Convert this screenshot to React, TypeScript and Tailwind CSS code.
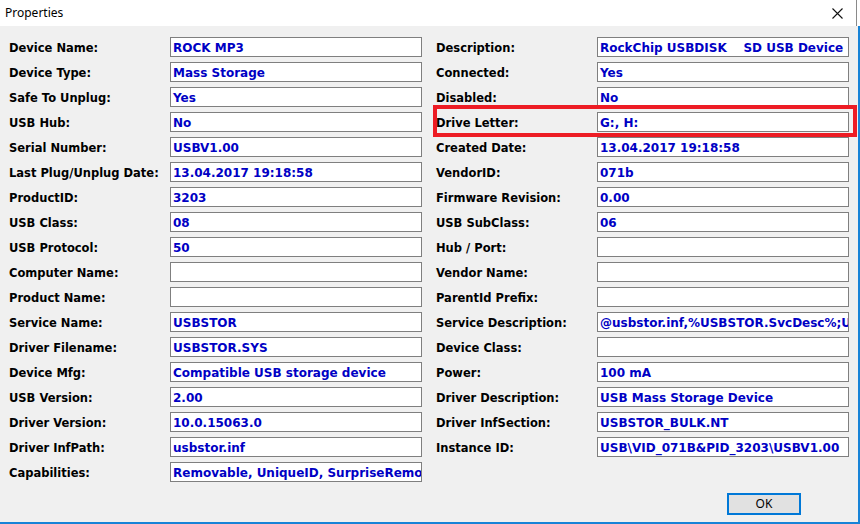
import React from "react";

const left: [string, string][] = [
  ["Device Name:", "ROCK MP3"],
  ["Device Type:", "Mass Storage"],
  ["Safe To Unplug:", "Yes"],
  ["USB Hub:", "No"],
  ["Serial Number:", "USBV1.00"],
  ["Last Plug/Unplug Date:", "13.04.2017 19:18:58"],
  ["ProductID:", "3203"],
  ["USB Class:", "08"],
  ["USB Protocol:", "50"],
  ["Computer Name:", ""],
  ["Product Name:", ""],
  ["Service Name:", "USBSTOR"],
  ["Driver Filename:", "USBSTOR.SYS"],
  ["Device Mfg:", "Compatible USB storage device"],
  ["USB Version:", "2.00"],
  ["Driver Version:", "10.0.15063.0"],
  ["Driver InfPath:", "usbstor.inf"],
  ["Capabilities:", "Removable, UniqueID, SurpriseRemovalOK"],
];

const right: [string, string][] = [
  ["Description:", "RockChip USBDISK    SD USB Device"],
  ["Connected:", "Yes"],
  ["Disabled:", "No"],
  ["Drive Letter:", "G:, H:"],
  ["Created Date:", "13.04.2017 19:18:58"],
  ["VendorID:", "071b"],
  ["Firmware Revision:", "0.00"],
  ["USB SubClass:", "06"],
  ["Hub / Port:", ""],
  ["Vendor Name:", ""],
  ["ParentId Prefix:", ""],
  ["Service Description:", "@usbstor.inf,%USBSTOR.SvcDesc%;USB Mass Storage"],
  ["Device Class:", ""],
  ["Power:", "100 mA"],
  ["Driver Description:", "USB Mass Storage Device"],
  ["Driver InfSection:", "USBSTOR_BULK.NT"],
  ["Instance ID:", "USB\\VID_071B&PID_3203\\USBV1.00"],
];

function Field({ label, value }: { label: string; value: string }) {
  return (
    <div className="flex h-[20px] items-center">
      <div className="w-[161px] shrink-0 pt-[4px] text-[11.5px] text-black">{label}</div>
      <div className="flex h-[20px] w-[252px] items-center overflow-hidden whitespace-pre border border-[#7f7f7f] bg-white pl-[2px] pt-[1px] text-[12px] text-[#0000c4]">
        {value}
      </div>
    </div>
  );
}

export default function App() {
  return (
    <div className="relative h-[524px] w-[860px] overflow-hidden bg-white" style={{ fontFamily: "'DejaVu Sans', sans-serif" }}>
      <div className="flex h-[26px] w-[857px] items-center justify-between border-r border-[#8a8a8a] bg-white pl-[5px] pr-[14px]">
        <span className="text-[12px] text-black" style={{ fontFamily: "'Noto Sans', sans-serif" }}>Properties</span>
        <svg width="11" height="11" viewBox="0 0 11 11" className="mr-[-1px]">
          <path d="M0.5 0.5 L10.5 10.5 M10.5 0.5 L0.5 10.5" stroke="#111" strokeWidth="1.1" fill="none" />
        </svg>
      </div>
      <div className="h-[498px] w-[860px] border-b-2 border-r-2 border-[#1883d7] bg-[#f0f0f0] pt-[11px]">
        <div className="flex gap-[14px] pl-[9px] font-bold leading-none">
          <div className="flex flex-col gap-[5px]">
            {left.map(([l, v]) => (
              <Field key={l} label={l} value={v} />
            ))}
          </div>
          <div className="flex flex-col gap-[5px]">
            {right.map(([l, v]) => (
              <Field key={l} label={l} value={v} />
            ))}
          </div>
        </div>
        <div className="mt-[11px] flex justify-end pr-[57px]">
          <button
            className="flex h-[22px] w-[74px] items-center justify-center border-2 border-[#0078d7] bg-[#e1e1e1] text-[12px] text-black"
            style={{ fontFamily: "'Noto Sans', sans-serif" }}
          >
            OK
          </button>
        </div>
      </div>
      <div className="pointer-events-none absolute left-[433px] top-[105px] h-[32px] w-[424px] border-4 border-[#ed1c24]" />
    </div>
  );
}
